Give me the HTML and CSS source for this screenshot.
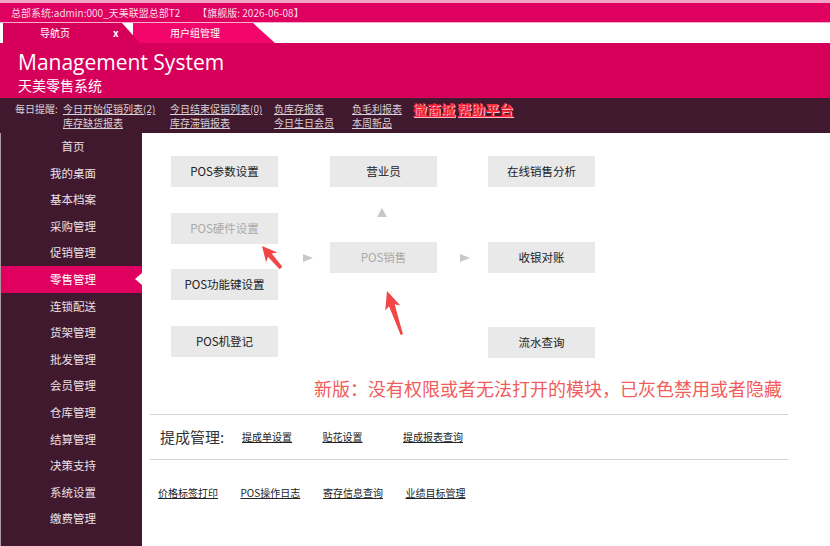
FILE: index.html
```html
<!DOCTYPE html>
<html>
<head>
    <link rel="stylesheet" href="styles.css">
</head>
<body>
<div class="topbar">
    <span>总部系统:admin:000_天美联盟总部T2</span><span class="edition">【旗舰版: 2026-06-08】</span>
</div>
<div class="tabs">
    <div class="tab tab-home">导航页<span class="close">x</span></div>
    <div class="tab tab-user">用户组管理</div>
</div>
<div class="header">
    <h1>Management System</h1>
    <p>天美零售系统</p>
</div>
<div class="remind">
    <div class="remind-label">每日提醒:</div>
    <div class="remind-grid">
        <a href="#">今日开始促销列表(2)</a>
        <a href="#">今日结束促销列表(0)</a>
        <a href="#">负库存报表</a>
        <a href="#">负毛利报表</a>
        <span class="hot"><a href="#">微商城</a> <a href="#">帮助平台</a></span>
        <a href="#">库存缺货报表</a>
        <a href="#">库存滞销报表</a>
        <a href="#">今日生日会员</a>
        <a href="#">本周新品</a>
    </div>
</div>
<div class="layout">
    <div class="sidebar">
        <div class="item">首页</div>
        <div class="item">我的桌面</div>
        <div class="item">基本档案</div>
        <div class="item">采购管理</div>
        <div class="item">促销管理</div>
        <div class="item active">零售管理</div>
        <div class="item">连锁配送</div>
        <div class="item">货架管理</div>
        <div class="item">批发管理</div>
        <div class="item">会员管理</div>
        <div class="item">仓库管理</div>
        <div class="item">结算管理</div>
        <div class="item">决策支持</div>
        <div class="item">系统设置</div>
        <div class="item">缴费管理</div>
    </div>
    <div class="main">
        <div class="flow">
            <div class="col col-left">
                <div class="mod">POS参数设置</div>
                <div class="mod off">POS硬件设置</div>
                <div class="mod">POS功能键设置</div>
                <div class="mod">POS机登记</div>
            </div>
            <div class="link-cell"><span class="arrow-right"></span></div>
            <div class="col">
                <div class="mod">营业员</div>
                <div class="up-cell"><span class="arrow-up"></span></div>
                <div class="mod off">POS销售</div>
            </div>
            <div class="link-cell cell-b"><span class="arrow-right"></span></div>
            <div class="col col-right">
                <div class="mod">在线销售分析</div>
                <div class="mod">收银对账</div>
                <div class="mod">流水查询</div>
            </div>
        </div>
        <p class="notice">新版：没有权限或者无法打开的模块，已灰色禁用或者隐藏</p>
        <div class="rule"></div>
        <div class="commission">
            <span class="commission-label">提成管理:</span>
            <a href="#">提成单设置</a>
            <a href="#">贴花设置</a>
            <a href="#">提成报表查询</a>
        </div>
        <div class="rule"></div>
        <div class="extra">
            <a href="#">价格标签打印</a>
            <a href="#">POS操作日志</a>
            <a href="#">寄存信息查询</a>
            <a href="#">业绩目标管理</a>
        </div>
        <!-- annotation arrows drawn over the module map -->
        <svg class="marks" width="688" height="413">
            <g transform="translate(120,113) rotate(-40.8)">
                <polygon points="0,0 7.5,15 2.5,12 1.8,29 -1.8,29 -2.5,12 -7.5,15" fill="#f24646"/>
            </g>
            <g transform="translate(245,158) rotate(-18.8)">
                <polygon points="0,0 8,18 3,15 1.2,46 -1.2,46 -3,15 -8,18" fill="#f24646"/>
            </g>
        </svg>
    </div>
</div>
</body>
</html>
```

FILE: styles.css
```css
body {
    margin: 0;
    background-color: #fff;
    font-family: "Noto Sans CJK SC", sans-serif;
}
a {
    color: inherit;
}
.topbar {
    height: 19px;
    border-top: 3px solid #f0a3c3;
    border-bottom: 1px solid #f3aecb;
    background-color: #e0005f;
    color: #f8dce8;
    font-size: 10px;
    line-height: 19px;
    padding-left: 11px;
}
.edition {
    margin-left: 17px;
}
.tabs {
    display: flex;
    height: 20px;
    padding-left: 3px;
}
.tab {
    box-sizing: border-box;
    height: 20px;
    line-height: 20px;
    font-size: 10px;
    color: #fff;
}
.tab-home {
    position: relative;
    z-index: 1;
    width: 137px;
    padding-left: 37px;
    background-color: #d6005b;
    clip-path: polygon(0 0, 119px 0, 100% 100%, 0 100%);
}
.close {
    margin-left: 43px;
    font-weight: bold;
}
.tab-user {
    width: 142px;
    margin-left: -7px;
    padding-left: 37px;
    background-color: #f2066b;
    clip-path: polygon(0 0, 120px 0, 100% 100%, 0 100%);
}
.header {
    height: 53px;
    border-top: 2px solid #d6005b;
    background-color: #d6005b;
    padding-left: 18px;
    color: #fff;
}
.header h1 {
    margin: 0;
    padding-top: 5px;
    font-family: "Open Sans", sans-serif;
    font-weight: normal;
    font-size: 21px;
    line-height: 25px;
}
.header p {
    margin: 1px 0 0;
    font-size: 14px;
    line-height: 18px;
}
.remind {
    display: flex;
    height: 35px;
    box-sizing: border-box;
    padding-top: 4px;
    background-color: #41192e;
    color: #d9cfd4;
    font-size: 10px;
    line-height: 14px;
}
.remind-label {
    width: 48px;
    padding-left: 15px;
}
.remind-grid {
    display: grid;
    grid-template-columns: 107px 104px 78px 61px auto;
    grid-auto-rows: 14px;
}
.remind-grid .hot {
    grid-row: span 2;
}
.hot a {
    color: #ff2638;
    font-size: 14px;
    font-weight: bold;
    line-height: 14px;
    text-shadow: 1px 1px 0 #f7b7c4;
}
.layout {
    display: flex;
    min-height: 413px;
}
.sidebar {
    width: 141px;
    border-left: 1px solid #a99aa2;
    background-color: #41192e;
}
.item {
    position: relative;
    height: 26.6px;
    line-height: 26.6px;
    padding-left: 3px;
    text-align: center;
    font-size: 11.5px;
    color: #ebe0e6;
}
.item.active {
    background-color: #e0005f;
    color: #fff;
}
.item.active::after {
    content: "";
    position: absolute;
    right: 0;
    top: 7px;
    border-right: 7px solid #fff;
    border-top: 6.5px solid transparent;
    border-bottom: 6.5px solid transparent;
}
.main {
    position: relative;
    flex: 1;
}
.flow {
    display: flex;
    padding: 23px 0 0 29px;
}
.col {
    display: flex;
    flex-direction: column;
    width: 107px;
}
.col-left {
    gap: 25.7px;
}
.col-right {
    gap: 54.5px;
}
.mod {
    height: 31px;
    line-height: 31px;
    background-color: #e9e9e9;
    text-align: center;
    font-size: 11.5px;
    color: #222;
}
.mod.off {
    color: #aaa;
}
.link-cell {
    width: 52px;
    box-sizing: border-box;
    padding: 97.5px 0 0 25px;
}
.cell-b {
    width: 51px;
    padding-left: 23px;
}
.arrow-right {
    display: block;
    width: 0;
    border-left: 10px solid #c8c8c8;
    border-top: 4.5px solid transparent;
    border-bottom: 4.5px solid transparent;
}
.up-cell {
    height: 55px;
    box-sizing: border-box;
    padding: 21px 0 0 47px;
}
.arrow-up {
    display: block;
    width: 0;
    border-bottom: 9px solid #c8c8c8;
    border-left: 5px solid transparent;
    border-right: 5px solid transparent;
}
.notice {
    margin: 18px 42px 0 8px;
    padding-right: 6px;
    text-align: right;
    font-size: 18px;
    line-height: 24px;
    color: #f25c5c;
}
.rule {
    height: 1px;
    margin: 14px 42px 0 8px;
    background-color: #d4d4d4;
}
.commission {
    display: flex;
    align-items: center;
    height: 43px;
    padding: 0 0 1px 18px;
}
.commission + .rule {
    margin-top: 0;
}
.commission-label {
    width: 82px;
    font-size: 15px;
    color: #333;
}
.commission a,
.extra a {
    font-size: 10px;
    color: #222;
}
.commission a {
    width: 80.5px;
}
.extra {
    display: flex;
    padding: 26px 0 0 16px;
    line-height: 13px;
}
.extra a {
    width: 82.5px;
}
.marks {
    position: absolute;
    left: 0;
    top: 0;
    pointer-events: none;
}
```
